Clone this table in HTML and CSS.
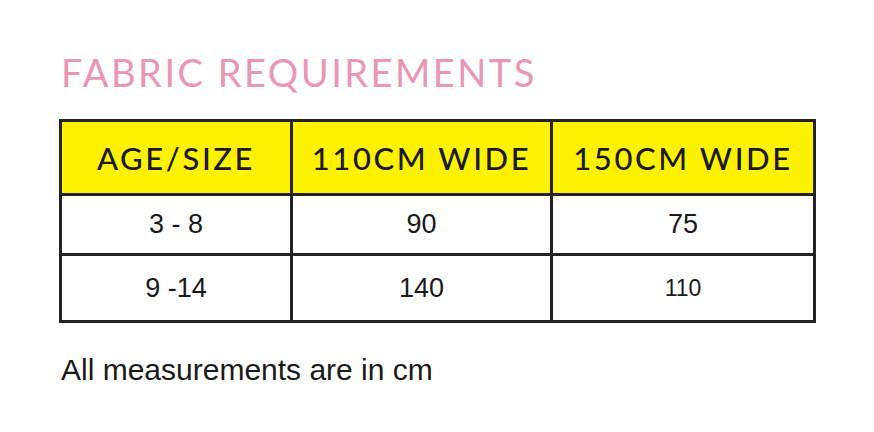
FILE: index.html
```html
<!DOCTYPE html>
<html>
<head>
<meta charset="utf-8">
<link rel="stylesheet" href="styles.css">
</head>
<body>
<div class="page">
  <h1 class="title">FABRIC REQUIREMENTS</h1>
  <table class="fabric">
    <thead>
      <tr>
        <th class="c1">AGE/SIZE</th>
        <th class="c2">110CM WIDE</th>
        <th class="c3">150CM WIDE</th>
      </tr>
    </thead>
    <tbody>
      <tr class="r1"><td>3 - 8</td><td>90</td><td>75</td></tr>
      <tr class="r2"><td>9 -14</td><td>140</td><td class="small">110</td></tr>
    </tbody>
  </table>
  <p class="note">All measurements are in cm</p>
</div>
</body>
</html>
```
FILE: styles.css
```css
html, body {
  margin: 0;
  padding: 0;
  background: #ffffff;
}
.page {
  padding: 50px 0 0 59px;
  font-family: "Liberation Sans", Arial, sans-serif;
}
.title {
  margin: 0 0 25px 2px;
  font-family: "Lato", "DejaVu Sans", sans-serif;
  font-weight: 400;
  font-size: 38px;
  line-height: 44px;
  letter-spacing: 2.5px;
  color: #ea97b5;
}
.fabric {
  border-collapse: collapse;
  border: 3px solid #232323;
  width: 757px;
}
.fabric th, .fabric td {
  border: 3px solid #232323;
  text-align: center;
  padding: 0;
}
.fabric th {
  background: #fff200;
  height: 71px;
  font-family: "Lato", "DejaVu Sans", sans-serif;
  font-weight: 500;
  font-size: 31px;
  letter-spacing: 2.6px;
  color: #1a1a1a;
}
.c1 { width: 228px; }
.c2 { width: 257px; }
.fabric td {
  font-size: 27px;
  color: #1a1a1a;
}
.fabric td.wide { letter-spacing: 0.5px; }
.r1 td { height: 57px; }
.r2 td { height: 64px; }
.fabric td.small { font-size: 23px; }
.note {
  margin: 30px 0 0 2px;
  font-size: 30px;
  line-height: 34px;
  color: #1a1a1a;
}
```
